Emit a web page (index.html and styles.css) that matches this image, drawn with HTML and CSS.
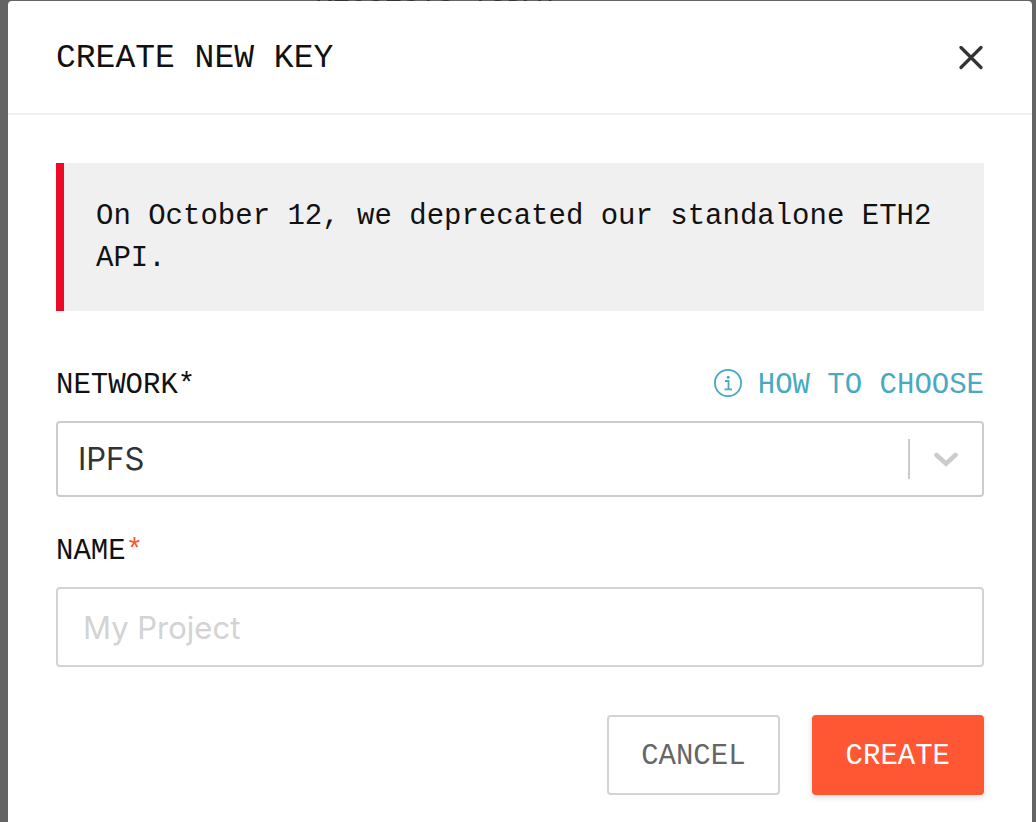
FILE: index.html
```
<!DOCTYPE html>
<html lang="en">

<head>
    <meta charset="UTF-8">
    <meta name="viewport" content="width=device-width, initial-scale=1.0">
    <title>Create new key</title>
    <link rel="stylesheet" href="styles.css">
</head>

<body>
    <div class="page-behind">REQUESTS TODAY</div>

    <div class="modal" role="dialog" aria-labelledby="modal-title">
        <header class="modal-header">
            <h1 id="modal-title">CREATE NEW KEY</h1>
            <button type="button" class="close" aria-label="Close">
                <svg width="26" height="24" viewBox="0 0 26 24">
                    <path d="M3 1.5L23 21.5M23 1.5L3 21.5" fill="none" stroke="#333" stroke-width="3.2" stroke-linecap="round" />
                </svg>
            </button>
        </header>

        <form class="modal-body">
            <p class="notice">On October 12, we deprecated our standalone ETH2 API.</p>

            <div class="field">
                <div class="label-row">
                    <label for="network">NETWORK*</label>
                    <a href="#" class="help">
                        <svg width="28" height="28" viewBox="0 0 28 28" fill="none" stroke="#48a9bf">
                            <circle cx="14" cy="14" r="13.1" stroke-width="1.8" />
                            <path d="M11 12H14.5V20.3M10.5 20.3H18" stroke-width="1.8" />
                            <circle cx="14.2" cy="8.3" r="1.5" fill="#48a9bf" stroke="none" />
                        </svg>
                        HOW TO CHOOSE
                    </a>
                </div>
                <div class="select">
                    <select id="network">
                        <option>IPFS</option>
                    </select>
                    <span class="arrow">
                        <svg width="24" height="16" viewBox="0 0 24 16">
                            <path d="M2.5 4L12 12.7L21.5 4" fill="none" stroke="#ccc" stroke-width="4.6" stroke-linecap="round" />
                        </svg>
                    </span>
                </div>
            </div>

            <div class="field">
                <div class="label-row">
                    <label for="name">NAME<span class="required">*</span></label>
                </div>
                <input type="text" id="name" placeholder="My Project">
            </div>

            <div class="actions">
                <button type="button" class="btn btn-cancel">CANCEL</button>
                <button type="submit" class="btn btn-create">CREATE</button>
            </div>
        </form>
    </div>
</body>

</html>
```

FILE: styles.css
```
* {
    box-sizing: border-box;
}

body {
    margin: 0;
    padding: 1px 4px 0 8px;
    min-height: 100vh;
    display: flex;
    background-color: #646464;
    color: #111;
    font-family: "Liberation Mono", monospace;
    font-size: 29px;
    overflow: hidden;
}

/* dashboard heading under the overlay */
.page-behind {
    position: absolute;
    top: -22px;
    left: 315px;
    line-height: 32px;
    color: #333;
}

.modal {
    position: relative;
    flex: 1;
    background-color: #fff;
    border-radius: 4px 4px 0 0;
}

.modal-header {
    display: flex;
    justify-content: space-between;
    align-items: center;
    height: 114px;
    padding: 2px 48px 0;
    border-bottom: 2px solid #f0f0f0;
}

h1 {
    margin: 0;
    font-size: 33px;
    font-weight: normal;
}

.close {
    display: flex;
    padding: 0;
    border: none;
    background: none;
    cursor: pointer;
}

.modal-body {
    padding: 48px 48px 28px;
}

.notice {
    margin: 0 0 56px;
    padding: 33px 32px 31px;
    border-left: 8px solid #ed0a26;
    background-color: #f0f0f0;
    line-height: 42px;
}

.field {
    margin-bottom: 36px;
}

.label-row {
    display: flex;
    justify-content: space-between;
    align-items: center;
    height: 36px;
    margin-bottom: 18px;
}

.required {
    color: #ff5733;
}

.help {
    display: flex;
    align-items: flex-start;
    gap: 16px;
    color: #48a9bf;
    text-decoration: none;
}

.select {
    position: relative;
}

select,
input {
    display: block;
    width: 100%;
    border: 2px solid #ccc;
    border-radius: 4px;
    background-color: #fff;
    font-family: Inter, sans-serif;
    font-size: 31px;
}

select {
    height: 76px;
    padding: 0 96px 2px 20px;
    color: #333;
    appearance: none;
}

input {
    height: 80px;
    padding: 0 25px;
    border-color: #d3d3d3;
}

input::placeholder {
    color: #d3d3d3;
}

.arrow {
    position: absolute;
    top: 18px;
    right: 2px;
    display: flex;
    justify-content: center;
    align-items: center;
    width: 74px;
    height: 40px;
    border-left: 2px solid #ccc;
    pointer-events: none;
}

.actions {
    display: flex;
    justify-content: flex-end;
    gap: 32px;
    margin-top: 48px;
}

.btn {
    height: 80px;
    padding: 2px 32px 0;
    border: 2px solid #d3d3d3;
    border-radius: 4px;
    background-color: #fff;
    color: #666;
    font-family: inherit;
    font-size: 29px;
    cursor: pointer;
}

.btn-create {
    border-color: #ff5733;
    background-color: #ff5733;
    color: #fff;
    box-shadow: 0 2px 6px rgba(0, 0, 0, 0.15);
}
```
